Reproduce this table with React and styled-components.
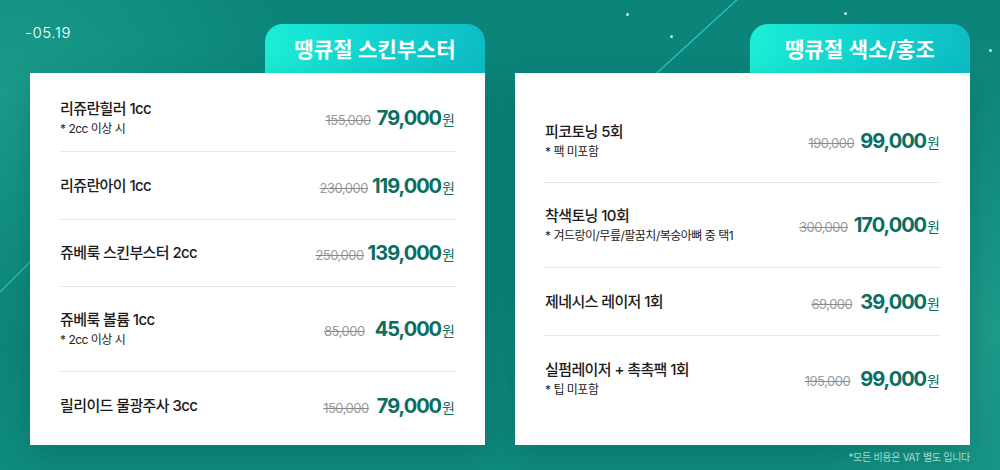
import React from "react";
import styled, { createGlobalStyle } from "styled-components";

const Global = createGlobalStyle`
  html, body { margin: 0; padding: 0; }
  body {
    width: 1000px; height: 470px; overflow: hidden;
    font-family: Inter, "Noto Sans CJK KR", sans-serif;
  }
`;

const Page = styled.div`
  position: relative;
  width: 1000px;
  height: 470px;
  box-sizing: border-box;
  padding: 24px 30px 0 30px;
  display: flex;
  gap: 30px;
  overflow: hidden;
  background:
    radial-gradient(ellipse 420px 360px at 0% 20%, rgba(40,175,155,0.55), rgba(40,175,155,0) 70%),
    radial-gradient(ellipse 300px 420px at 100% 70%, rgba(40,170,150,0.6), rgba(40,170,150,0) 70%),
    linear-gradient(180deg, #0b847a 0%, #0b8479 60%, #0f8c7f 100%);
`;

const Deco = styled.svg`
  position: absolute;
  left: 0;
  top: 0;
  pointer-events: none;
`;

const Star = styled.span`
  position: absolute;
  width: 3px;
  height: 3px;
  border-radius: 50%;
  background: rgba(230, 255, 250, 0.85);
`;

const Column = styled.div`
  position: relative;
  width: 455px;
  display: flex;
  flex-direction: column;
`;

const Header = styled.div`
  display: flex;
  justify-content: space-between;
  align-items: flex-start;
  height: 49px;
`;

const DateText = styled.div`
  margin-left: -5px;
  margin-top: 1px;
  font-size: 15px;
  line-height: 16px;
  font-weight: 300;
  letter-spacing: 0.6px;
  color: #ffffff;
`;

const Tab = styled.div`
  width: 220px;
  height: 49px;
  border-radius: 18px 18px 0 0;
  background: linear-gradient(90deg, #1beed6 0%, #12d3cf 50%, #0ebcc6 100%);
  display: flex;
  align-items: center;
  justify-content: center;
  color: #ffffff;
  font-size: 21px;
  font-weight: 700;
  letter-spacing: 0.2px;
  padding-bottom: 2px;
  box-sizing: border-box;
`;

const Card = styled.div`
  background: #ffffff;
  height: 372px;
  box-sizing: border-box;
  padding: ${(p) => p.$padTop}px 30px 0 30px;
  display: flex;
  flex-direction: column;
  box-shadow: 0 12px 30px rgba(0, 60, 55, 0.25);
`;

const Row = styled.div`
  height: ${(p) => p.$h}px;
  flex: none;
  box-sizing: border-box;
  display: flex;
  align-items: center;
  justify-content: space-between;
  border-bottom: ${(p) => (p.$last ? "none" : "1px dotted #cfcfcf")};
`;

const NameBlock = styled.div`
  display: flex;
  flex-direction: column;
`;

const Name = styled.div`
  font-size: 15px;
  line-height: 20px;
  font-weight: 500;
  color: #1b1b1b;
  letter-spacing: -0.6px;
`;

const Sub = styled.div`
  margin-top: 2px;
  font-size: 12px;
  line-height: 16px;
  color: #222222;
  letter-spacing: -0.5px;
`;

const PriceBlock = styled.div`
  display: flex;
  align-items: baseline;
`;

const OldPrice = styled.span`
  font-size: 13px;
  color: #9a9a9a;
  text-decoration: line-through;
  text-decoration-color: #8a8a8a;
  letter-spacing: -0.5px;
  margin-right: ${(p) => p.$gap}px;
`;

const NewPrice = styled.span`
  font-size: 20px;
  font-weight: 700;
  color: #0a6e60;
  letter-spacing: -1px;
`;

const Won = styled.span`
  font-size: 14px;
  color: #0a6e60;
  margin-left: 1px;
`;

const Footnote = styled.div`
  margin-top: 5px;
  text-align: right;
  font-size: 10px;
  line-height: 14px;
  color: rgba(220, 245, 240, 0.75);
  letter-spacing: -0.3px;
`;

const left = [
  { name: "리쥬란힐러 1cc", sub: "* 2cc 이상 시", old: "155,000", price: "79,000", h: 67, gap: 6 },
  { name: "리쥬란아이 1cc", old: "230,000", price: "119,000", h: 68, gap: 4 },
  { name: "쥬베룩 스킨부스터 2cc", old: "250,000", price: "139,000", h: 67, gap: 4 },
  { name: "쥬베룩 볼륨 1cc", sub: "* 2cc 이상 시", old: "85,000", price: "45,000", h: 85, gap: 10 },
  { name: "릴리이드 물광주사 3cc", old: "150,000", price: "79,000", h: 68, gap: 8 },
];

const right = [
  { name: "피코토닝 5회", sub: "* 팩 미포함", old: "190,000", price: "99,000", h: 84, gap: 6 },
  { name: "착색토닝 10회", sub: "* 겨드랑이/무릎/팔꿈치/복숭아뼈 중 택1", old: "300,000", price: "170,000", h: 85, gap: 6 },
  { name: "제네시스 레이저 1회", old: "69,000", price: "39,000", h: 68, gap: 8 },
  { name: "실펌레이저 + 촉촉팩 1회", sub: "* 팁 미포함", old: "195,000", price: "99,000", h: 86, gap: 10 },
];

function PriceCard({ items, padTop }) {
  return (
    <Card $padTop={padTop}>
      {items.map((it, i) => (
        <Row key={i} $h={it.h} $last={i === items.length - 1}>
          <NameBlock>
            <Name>{it.name}</Name>
            {it.sub && <Sub>{it.sub}</Sub>}
          </NameBlock>
          <PriceBlock>
            <OldPrice $gap={it.gap}>{it.old}</OldPrice>
            <NewPrice>{it.price}</NewPrice>
            <Won>원</Won>
          </PriceBlock>
        </Row>
      ))}
    </Card>
  );
}

const stars = [
  [626, 13],
  [670, 35],
  [844, 12],
  [989, 49],
];

export default function App() {
  return (
    <>
      <Global />
      <Page>
        <Deco width="1000" height="470" viewBox="0 0 1000 470">
          <line x1="740" y1="-3" x2="600" y2="125" stroke="#2fd8d2" strokeWidth="1.2" opacity="0.85" />
          <line x1="40" y1="252" x2="-5" y2="297" stroke="#2fd8d2" strokeWidth="1.2" opacity="0.85" />
        </Deco>
        {stars.map(([x, y], i) => (
          <Star key={i} style={{ left: x, top: y }} />
        ))}
        <Column>
          <Header>
            <DateText>-05.19</DateText>
            <Tab>땡큐절 스킨부스터</Tab>
          </Header>
          <PriceCard items={left} padTop={12} />
        </Column>
        <Column>
          <Header>
            <span />
            <Tab>땡큐절 색소/홍조</Tab>
          </Header>
          <PriceCard items={right} padTop={26} />
          <Footnote>*모든 비용은 VAT 별도 입니다</Footnote>
        </Column>
      </Page>
    </>
  );
}
